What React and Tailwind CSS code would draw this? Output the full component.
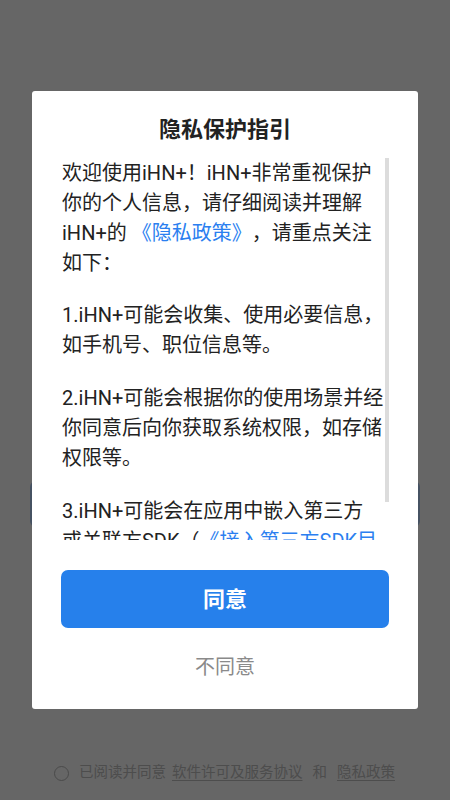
import { useState } from "react";

const font = { fontFamily: 'Roboto, "Noto Sans CJK SC", sans-serif' };

export default function App() {
  const [agreed, setAgreed] = useState(false);

  return (
    <div className="relative h-[800px] w-full overflow-hidden bg-white [text-spacing-trim:space-all]" style={font}>
      {/* page under the dialog */}
      <div className="flex h-full flex-col">
        <button className="mx-[30px] mt-[481px] h-[46px] rounded-[6px] bg-[#b0cdf5]" />
        <div className="mt-[236px] flex h-[20px] items-center pl-[54px] text-[14.5px] leading-[20px] text-[#c0c0c0]">
          <span
            onClick={() => setAgreed(!agreed)}
            className="h-[15px] w-[15px] rounded-full border-[1.5px] border-[#b8b8b8]"
          />
          <span className="ml-[10px]">已阅读并同意</span>
          <span className="ml-[1px] px-[5px] underline underline-offset-[3px]">软件许可及服务协议</span>
          <span className="ml-[5px]">和</span>
          <span className="ml-[7px] px-[3px] underline underline-offset-[3px]">隐私政策</span>
        </div>
      </div>

      {/* dim overlay + dialog */}
      <div className="absolute inset-0 flex items-center justify-center bg-black/60">
        <div className="flex h-[618px] w-[386px] flex-col rounded-[3px] bg-white">
          <h2 className="mt-[24px] text-center text-[22px] font-bold leading-[30px] text-[#222]">
            隐私保护指引
          </h2>

          <div className="relative ml-[30px] mr-[29px] mt-[13px] h-[382px] overflow-hidden">
            <div className="pr-[4px] text-[20px] leading-[30px] text-[#222]">
              <p>
                欢迎使用iHN+！iHN+非常重视保护
                <br />
                你的个人信息，请仔细阅读并理解
                <br />
                iHN+的 <span className="text-[#2b7ff0]">《隐私政策》</span>，请重点关注
                <br />
                如下：
              </p>
              <p className="mt-[22px]">
                1.iHN+可能会收集、使用必要信息，
                <br />
                如手机号、职位信息等。
              </p>
              <p className="mt-[23px]">
                2.iHN+可能会根据你的使用场景并经
                <br />
                你同意后向你获取系统权限，如存储
                <br />
                权限等。
              </p>
              <p className="mt-[23px]">
                3.iHN+可能会在应用中嵌入第三方
                <br />
                或关联方SDK（<span className="text-[#2b7ff0]">《接入第三方SDK目录》</span>），并通过SDK收集、使用你的个人信息。
              </p>
            </div>
            {/* scrollbar thumb */}
            <div className="absolute right-0 top-0 h-[344px] w-[4px] bg-[#dcdcdc]" />
          </div>

          <button className="mx-[29px] mt-[30px] h-[58px] rounded-[7px] bg-[#2680eb] text-[22px] font-bold text-white">
            同意
          </button>
          <button className="mt-[24px] h-[30px] text-center text-[20px] leading-[30px] text-[#8a8a8a]">
            不同意
          </button>
        </div>
      </div>
    </div>
  );
}
